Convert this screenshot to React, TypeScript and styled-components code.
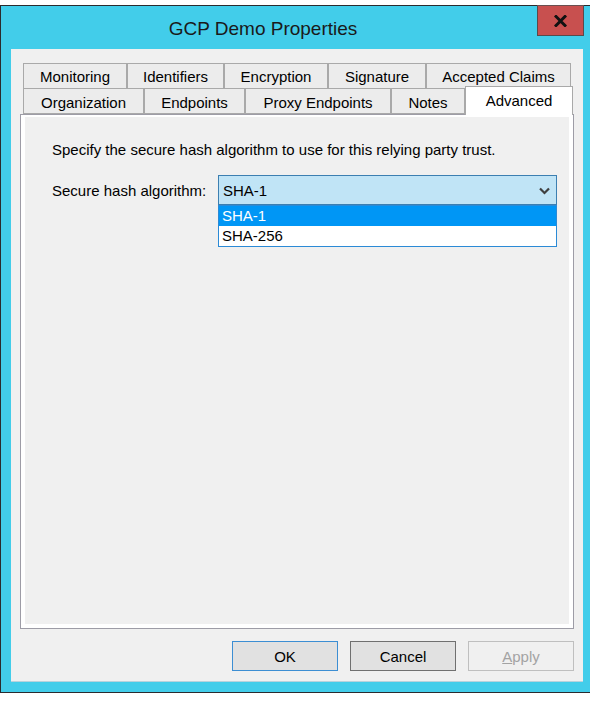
import React from "react";
import styled, { createGlobalStyle } from "styled-components";

const Global = createGlobalStyle`
  html, body { margin: 0; padding: 0; background: #ffffff; }
  body { font-family: "Liberation Sans", Arial, sans-serif; font-size: 15px; color: #000; }
  * { box-sizing: border-box; }
`;

const Page = styled.div`
  width: 590px;
  height: 718px;
  overflow: hidden;
  padding-top: 5px;
  background: #ffffff;
`;

const Window = styled.div`
  width: 590px;
  border-left: 1px solid #2b2b2e;
  border-top: 1px solid #2b2b2e;
  border-bottom: 1px solid #2b2b2e;
  background: #42cdea;
  padding: 0 7px 10px 10px;
  display: flex;
  flex-direction: column;
`;

const TitleBar = styled.div`
  height: 43px;
  display: flex;
  align-items: flex-start;
`;

const Title = styled.div`
  flex: 1;
  text-align: center;
  font-size: 19px;
  line-height: 22px;
  padding-top: 12px;
  padding-right: 22px;
  color: #1a1a1a;
`;

const CloseButton = styled.div`
  width: 47px;
  height: 31px;
  margin-top: -1px;
  margin-right: -1px;
  background: #c8504f;
  border: 1px solid #5a4a4a;
  border-top-color: #6a5050;
  display: flex;
  align-items: center;
  justify-content: center;
`;

const Client = styled.div`
  height: 633px;
  background: #f0f0f0;
  padding: 14px 9px 0 9px;
  display: flex;
  flex-direction: column;
  box-shadow: inset 0 -1px 0 #b8d2dc;
`;

const TabStrip = styled.div`
  display: flex;
  flex-direction: column;
  padding-left: 3px;
`;

const TabRow = styled.div<{ $h: number }>`
  display: flex;
  height: ${(p) => p.$h}px;
  align-items: stretch;
`;

const Tab = styled.div<{ $w: number; $top?: boolean }>`
  width: ${(p) => p.$w}px;
  background: #ececec;
  border: 1px solid #a9a9a9;
  border-bottom: ${(p) => (p.$top ? "none" : "1px solid #a9a9a9")};
  display: flex;
  align-items: center;
  justify-content: center;
  padding-top: ${(p) => (p.$top ? 2 : 3)}px;
  line-height: 18px;
  white-space: nowrap;
`;

const ActiveTab = styled.div<{ $w: number }>`
  width: ${(p) => p.$w}px;
  margin-top: -2px;
  margin-bottom: -1px;
  background: #ffffff;
  border: 1px solid #a9a9a9;
  border-bottom: none;
  position: relative;
  z-index: 1;
  display: flex;
  align-items: center;
  justify-content: center;
  line-height: 18px;
  padding-bottom: 1px;
`;

const Panel = styled.div`
  height: 515px;
  border: 1px solid #9d9ca6;
  background: #ffffff;
  padding: 2px 4px 4px 4px;
  display: flex;
`;

const PanelInner = styled.div`
  flex: 1;
  background: #f0f0f0;
  padding: 24px 0 0 27px;
  display: flex;
  flex-direction: column;
`;

const Description = styled.div`
  line-height: 18px;
`;

const FieldRow = styled.div`
  margin-top: 16px;
  display: flex;
  align-items: center;
  height: 30px;
`;

const Label = styled.div`
  width: 166px;
  line-height: 18px;
  padding-top: 2px;
`;

const ComboWrap = styled.div`
  position: relative;
  width: 339px;
  height: 30px;
`;

const Combo = styled.div`
  height: 30px;
  background: #c0e4f6;
  border: 1px solid #3c7fb1;
  display: flex;
  align-items: center;
  padding: 1px 6px 0 4px;
  line-height: 18px;
`;

const ComboValue = styled.div`
  flex: 1;
`;

const DropList = styled.div`
  position: absolute;
  left: 0;
  top: 30px;
  width: 339px;
  border: 1px solid #2b8ad6;
  background: #ffffff;
  z-index: 5;
`;

const Option = styled.div<{ $selected?: boolean }>`
  height: 20px;
  line-height: 20px;
  padding-left: 3px;
  background: ${(p) => (p.$selected ? "#0096f5" : "#ffffff")};
  color: ${(p) => (p.$selected ? "#ffffff" : "#000000")};
`;

const ButtonRow = styled.div`
  margin-top: 12px;
  display: flex;
  justify-content: flex-end;
  gap: 12px;
`;

const Button = styled.div<{ $variant?: "default" | "normal" | "disabled" }>`
  width: 106px;
  height: 30px;
  display: flex;
  align-items: center;
  justify-content: center;
  line-height: 18px;
  padding-top: 1px;
  background: ${(p) => (p.$variant === "disabled" ? "#f0f0f0" : "#e1e1e1")};
  border: 1px solid
    ${(p) =>
      p.$variant === "default"
        ? "#3c8ed3"
        : p.$variant === "disabled"
        ? "#bfbfbf"
        : "#707070"};
  color: ${(p) => (p.$variant === "disabled" ? "#a3a3a3" : "#000")};
`;

const row1 = [
  { label: "Monitoring", w: 104 },
  { label: "Identifiers", w: 97 },
  { label: "Encryption", w: 104 },
  { label: "Signature", w: 98 },
  { label: "Accepted Claims", w: 145 },
];

const row2 = [
  { label: "Organization", w: 121 },
  { label: "Endpoints", w: 101 },
  { label: "Proxy Endpoints", w: 146 },
  { label: "Notes", w: 74 },
];

export default function App() {
  return (
    <>
      <Global />
      <Page>
        <Window>
          <TitleBar>
            <Title>GCP Demo Properties</Title>
            <CloseButton>
              <svg width="13" height="12" viewBox="0 0 13 12">
                <path d="M2 1.5 L11 10.5 M11 1.5 L2 10.5" stroke="#111" strokeWidth="3" strokeLinecap="square" />
              </svg>
            </CloseButton>
          </TitleBar>
          <Client>
            <TabStrip>
              <TabRow $h={25}>
                {row1.map((t) => (
                  <Tab key={t.label} $w={t.w} $top>
                    {t.label}
                  </Tab>
                ))}
              </TabRow>
              <TabRow $h={26}>
                {row2.map((t) => (
                  <Tab key={t.label} $w={t.w}>
                    {t.label}
                  </Tab>
                ))}
                <ActiveTab $w={108}>Advanced</ActiveTab>
              </TabRow>
            </TabStrip>
            <Panel>
              <PanelInner>
                <Description>
                  Specify the secure hash algorithm to use for this relying party trust.
                </Description>
                <FieldRow>
                  <Label>Secure hash algorithm:</Label>
                  <ComboWrap>
                    <Combo>
                      <ComboValue>SHA-1</ComboValue>
                      <svg width="11" height="8" viewBox="0 0 11 8">
                        <polyline points="1,1.5 5.5,6 10,1.5" fill="none" stroke="#3f3f3f" strokeWidth="2.2" />
                      </svg>
                    </Combo>
                    <DropList>
                      <Option $selected>SHA-1</Option>
                      <Option>SHA-256</Option>
                    </DropList>
                  </ComboWrap>
                </FieldRow>
              </PanelInner>
            </Panel>
            <ButtonRow>
              <Button $variant="default">OK</Button>
              <Button $variant="normal">Cancel</Button>
              <Button $variant="disabled">
                <span>
                  <u>A</u>pply
                </span>
              </Button>
            </ButtonRow>
          </Client>
        </Window>
      </Page>
    </>
  );
}
